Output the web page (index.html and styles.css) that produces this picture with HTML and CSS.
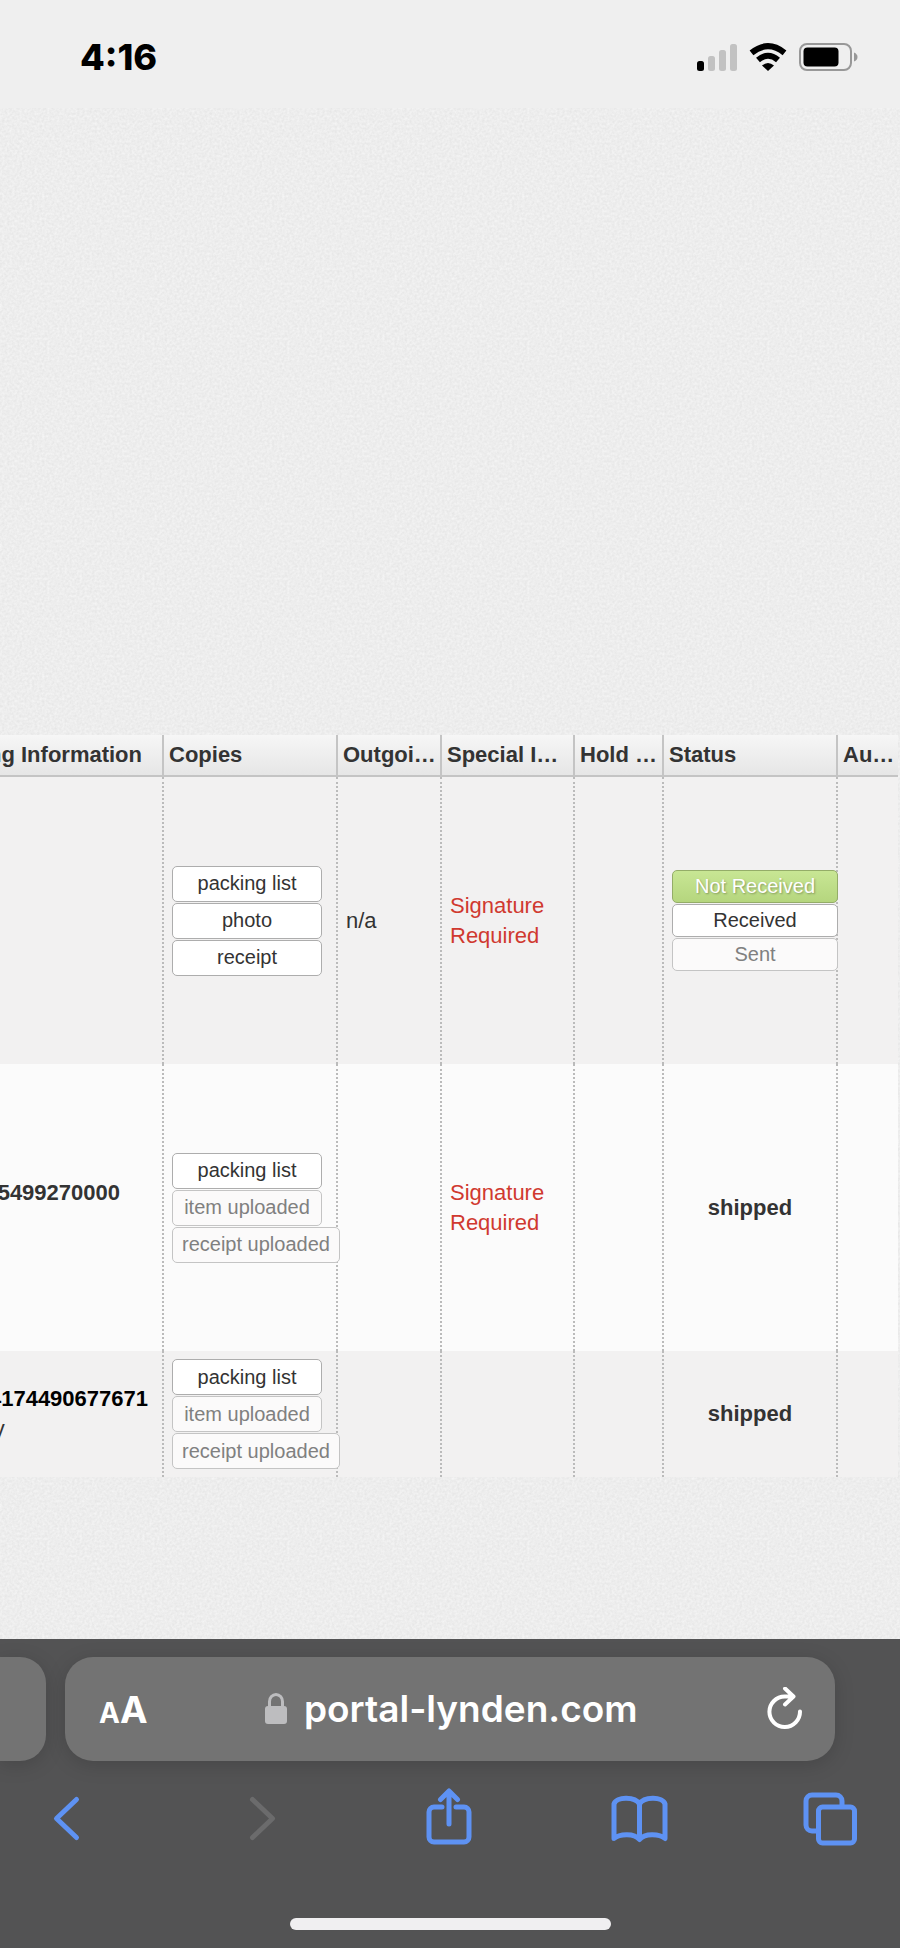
FILE: index.html
```html
<!DOCTYPE html>
<html lang="en">
<head>
  <meta charset="UTF-8">
  <meta name="viewport" content="width=device-width, initial-scale=1.0">
  <title>portal-lynden.com</title>
  <link rel="stylesheet" href="styles.css">
</head>
<body>
  <header class="status-bar">
    <time class="clock">4:16</time>
    <div class="indicators">
      <svg class="signal" width="40" height="27" viewBox="0 0 40 27">
        <rect x="0" y="17" width="7" height="10" rx="2.5" fill="#000"/>
        <rect x="11" y="12" width="7" height="15" rx="2.5" fill="#c2c2c2"/>
        <rect x="22" y="6" width="7" height="21" rx="2.5" fill="#c2c2c2"/>
        <rect x="33" y="0" width="7" height="27" rx="2.5" fill="#c2c2c2"/>
      </svg>
      <svg class="wifi" width="38" height="28" viewBox="0 0 38 28">
        <path d="M2.500 9.800Q19-3.500 35.500 9.800" fill="none" stroke="#000" stroke-width="6"/>
        <path d="M9 17Q19 8.500 29 17" fill="none" stroke="#000" stroke-width="6"/>
        <path d="M13 22.500Q19 17.500 25 22.500L19 28Z" fill="#000"/>
      </svg>
      <svg class="battery" width="59" height="28" viewBox="0 0 59 28">
        <rect x="1" y="1" width="51" height="26" rx="7" fill="none" stroke="#989898" stroke-width="2"/>
        <rect x="4.500" y="4.500" width="35" height="19" rx="4" fill="#000"/>
        <path d="M55 9.500Q58.500 11 58.500 14T55 18.500Z" fill="#989898"/>
      </svg>
    </div>
  </header>

  <main class="page">
    <table class="orders">
      <colgroup>
        <col>
        <col class="col-copies">
        <col class="col-outgoing">
        <col class="col-special">
        <col class="col-hold">
        <col class="col-status">
        <col class="col-last">
      </colgroup>
      <thead>
        <tr>
          <th class="tracking"><div class="clip clip-head">ng Information</div></th>
          <th>Copies</th>
          <th>Outgoi…</th>
          <th>Special I…</th>
          <th>Hold …</th>
          <th>Status</th>
          <th>Au…</th>
        </tr>
      </thead>
      <tbody>
        <tr class="tall odd">
          <td></td>
          <td>
            <div class="buttons">
              <button type="button" class="btn">packing list</button>
              <button type="button" class="btn">photo</button>
              <button type="button" class="btn">receipt</button>
            </div>
          </td>
          <td>n/a</td>
          <td class="warning">Signature Required</td>
          <td></td>
          <td>
            <div class="buttons status-buttons">
              <button type="button" class="btn active">Not Received</button>
              <button type="button" class="btn">Received</button>
              <button type="button" class="btn" disabled>Sent</button>
            </div>
          </td>
          <td></td>
        </tr>
        <tr class="tall">
          <td class="tracking"><div class="clip clip-short"><p><strong>5499270000</strong><br>&nbsp;</p></div></td>
          <td>
            <div class="buttons">
              <button type="button" class="btn">packing list</button>
              <button type="button" class="btn" disabled>item uploaded</button>
              <button type="button" class="btn" disabled>receipt uploaded</button>
            </div>
          </td>
          <td></td>
          <td class="warning">Signature Required</td>
          <td></td>
          <td class="shipped">shipped</td>
          <td></td>
        </tr>
        <tr class="odd">
          <td class="tracking"><div class="clip clip-long"><p><strong class="dark">4174490677671</strong><br>ly</p></div></td>
          <td>
            <div class="buttons">
              <button type="button" class="btn">packing list</button>
              <button type="button" class="btn" disabled>item uploaded</button>
              <button type="button" class="btn" disabled>receipt uploaded</button>
            </div>
          </td>
          <td></td>
          <td></td>
          <td></td>
          <td class="shipped">shipped</td>
          <td></td>
        </tr>
      </tbody>
    </table>
  </main>

  <footer class="browser-bar">
    <div class="tabs">
      <div class="prev-tab"></div>
      <div class="address">
        <button type="button" class="text-size" aria-label="Text size"><span class="small-a">A</span>A</button>
        <div class="url">
          <svg width="23" height="32" viewBox="0 0 23 32">
            <rect x="0" y="13" width="22" height="18" rx="3" fill="#bdbdbf"/>
            <path d="M4.500 14V8.500a6.500 7 0 0 1 13 0V14" fill="none" stroke="#bdbdbf" stroke-width="3"/>
          </svg>
          <span>portal-lynden.com</span>
        </div>
        <button type="button" class="reload" aria-label="Reload">
          <svg width="36" height="44" viewBox="0 0 36 44" fill="none" stroke="#fff" stroke-width="4" stroke-linecap="round" stroke-linejoin="round">
            <path d="M33 24.500A15.300 15.300 0 1 1 17.800 9.500H26M18 1.500l8.500 8L18 17.500"/>
          </svg>
        </button>
      </div>
    </div>
    <nav class="toolbar">
      <button type="button" aria-label="Back">
        <svg width="60" height="60" viewBox="0 0 60 60"><path d="M40.500 11.500L20.500 30.500l20 19"/></svg>
      </button>
      <button type="button" aria-label="Forward" disabled>
        <svg width="60" height="60" viewBox="0 0 60 60"><path d="M25.500 11.500l20 19-20 19"/></svg>
      </button>
      <button type="button" aria-label="Share">
        <svg width="60" height="60" viewBox="0 0 60 60"><path d="M24 19H16a5 5 0 0 0-5 5v25a5 5 0 0 0 5 5h30a5 5 0 0 0 5-5V24a5 5 0 0 0-5-5h-8M31 36V4M22.500 11.500L31 3l8.500 8.500"/></svg>
      </button>
      <button type="button" aria-label="Bookmarks">
        <svg width="60" height="60" viewBox="0 0 60 60"><path d="M30.500 16C26 8 7 8.500 5 16V50.500C10 46 25 44.500 30.500 51.500 36 44.500 51 46 56 50.500V16C54 8.500 35 8 30.500 16V51"/></svg>
      </button>
      <button type="button" aria-label="Tabs">
        <svg width="60" height="60" viewBox="0 0 60 60"><rect x="18.500" y="19" width="36" height="36" rx="4"/><path d="M17.500 43H12a6 6 0 0 1-6-6V13a6 6 0 0 1 6-6H36a6 6 0 0 1 6 6v5"/></svg>
      </button>
    </nav>
    <div class="home-indicator"></div>
  </footer>
</body>
</html>
```
FILE: styles.css
```css
* {
  box-sizing: border-box;
}
body {
  margin: 0;
  min-height: 100vh;
  display: flex;
  flex-direction: column;
  overflow-x: hidden;
  background-color: #efefef;
  color: #333;
  font-family: "Liberation Sans", Arial, sans-serif;
  font-size: 22px;
  line-height: 30px;
}
button {
  font-family: inherit;
  cursor: pointer;
}
svg {
  display: block;
}

/* phone status bar */
.status-bar {
  display: flex;
  justify-content: space-between;
  align-items: center;
  height: 108px;
  padding: 6px 42px 0 80px;
}
.clock {
  font-family: Inter, sans-serif;
  font-size: 36px;
  font-weight: 800;
  color: #000;
}
.indicators {
  display: flex;
  align-items: center;
  gap: 12px;
}

/* page with paper grain */
.page {
  flex: 1;
  padding: 627px 2px 161px 0;
  background-color: #eee;
  background-image: url("data:image/svg+xml,%3Csvg xmlns='http://www.w3.org/2000/svg' width='240' height='240'%3E%3Cfilter id='n' x='0' y='0' width='1' height='1' color-interpolation-filters='sRGB'%3E%3CfeTurbulence type='fractalNoise' baseFrequency='.4' numOctaves='2' stitchTiles='stitch'/%3E%3CfeColorMatrix values='.08 0 0 0 .89 .08 0 0 0 .89 .08 0 0 0 .89 0 0 0 0 1'/%3E%3C/filter%3E%3Crect width='240' height='240' filter='url(%23n)'/%3E%3C/svg%3E");
}
.orders {
  width: 100%;
  table-layout: fixed;
  border-spacing: 0;
}
.col-copies,
.col-status {
  width: 174px;
}
.col-outgoing {
  width: 104px;
}
.col-special {
  width: 133px;
}
.col-hold {
  width: 89px;
}
.col-last {
  width: 62px;
}
th {
  height: 42px;
  padding: 0 0 0 5px;
  background: linear-gradient(#f6f6f6, #e6e6e6);
  border-left: 2px solid #c4c4c4;
  border-bottom: 2px solid #c4c4c4;
  text-align: left;
  white-space: nowrap;
}
td {
  padding: 8px;
  background-color: #fbfbfb;
  border-left: 2px dotted #bbb;
  vertical-align: middle;
}
th:first-child,
td:first-child {
  border-left: 0;
}
.odd td {
  background-color: #f2f1f1;
}
.tall {
  height: 287px;
}
th.tracking,
td.tracking {
  padding: 0;
}
.clip {
  display: flex;
  justify-content: flex-end;
  overflow: hidden;
  white-space: nowrap;
}
.clip p {
  margin: 0;
}
.clip-head {
  padding-right: 20px;
}
.clip-short {
  padding-right: 42px;
}
.clip-long {
  padding-right: 14px;
}
.dark {
  color: #000;
}
.warning {
  color: #d0392f;
}
.shipped {
  font-weight: bold;
  text-align: center;
}

.buttons {
  display: flex;
  flex-direction: column;
  align-items: flex-start;
  gap: 1px;
}
.btn {
  min-width: 150px;
  height: 36px;
  padding: 0 9px;
  background-color: #fff;
  border: 1px solid #adadad;
  border-radius: 5px;
  color: #333;
  font-size: 20px;
  white-space: nowrap;
}
.btn:disabled {
  background-color: #fbfafa;
  border-color: #c4c4c4;
  color: #808080;
}
.status-buttons .btn {
  min-width: 166px;
  height: 33px;
}
.btn.active {
  background: linear-gradient(#c8e694, #b5d67e);
  border-color: #94ad68;
  color: #fff;
  text-shadow: 1px 1px 2px rgba(0, 0, 0, 0.3);
}

/* browser controls */
.browser-bar {
  padding: 18px 0;
  background-color: #535354;
}
.tabs {
  display: flex;
  gap: 19px;
  padding-right: 65px;
}
.prev-tab {
  width: 46px;
  background-color: #737373;
  border-radius: 0 26px 26px 0;
  box-shadow: 0 4px 20px rgba(0, 0, 0, 0.15);
}
.address {
  flex: 1;
  display: flex;
  justify-content: space-between;
  align-items: center;
  height: 104px;
  padding: 0 32px 0 34px;
  background-color: #737373;
  border-radius: 28px;
  box-shadow: 0 4px 20px rgba(0, 0, 0, 0.15);
}
.address button,
.toolbar button {
  padding: 0;
  border: 0;
  background: none;
}
.text-size {
  color: #fff;
  font-size: 37px;
  font-weight: 700;
}
.address .text-size,
.url {
  font-family: Inter, sans-serif;
}
.small-a {
  font-size: 28px;
}
.url {
  display: flex;
  align-items: center;
  gap: 16px;
  padding-right: 12px;
  color: #fff;
  font-size: 37px;
  font-weight: 600;
}
.toolbar {
  display: flex;
  justify-content: space-between;
  padding: 27px 40px 70px 36px;
}
.toolbar svg {
  fill: none;
  stroke: #5e92f3;
  stroke-width: 5;
  stroke-linecap: round;
  stroke-linejoin: round;
}
.toolbar button:disabled svg {
  stroke: #6b6b6c;
}
.home-indicator {
  width: 321px;
  height: 12px;
  margin: 0 auto;
  background-color: #f0eff1;
  border-radius: 6px;
}
```
